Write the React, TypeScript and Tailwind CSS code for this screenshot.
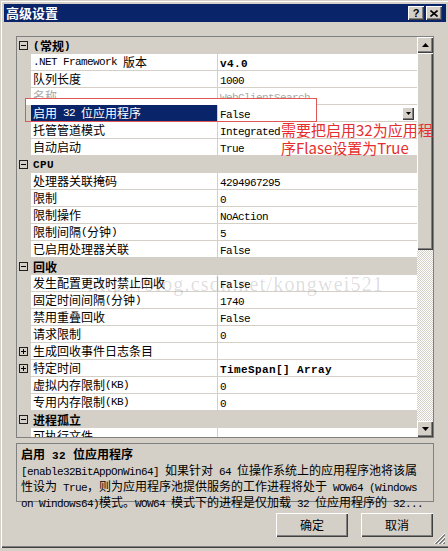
import React from "react";

type Row =
  | { kind: "cat"; label: string }
  | {
      kind: "item";
      name: string;
      value?: string;
      bold?: boolean;
      disabled?: boolean;
      selected?: boolean;
      expand?: boolean;
    };

const rows: Row[] = [
  { kind: "cat", label: "(常规)" },
  { kind: "item", name: ".NET Framework 版本", value: "v4.0", bold: true },
  { kind: "item", name: "队列长度", value: "1000" },
  { kind: "item", name: "名称", value: "WebClientSearch", disabled: true },
  { kind: "item", name: "启用 32 位应用程序", value: "False", selected: true },
  { kind: "item", name: "托管管道模式", value: "Integrated" },
  { kind: "item", name: "自动启动", value: "True" },
  { kind: "cat", label: "CPU" },
  { kind: "item", name: "处理器关联掩码", value: "4294967295" },
  { kind: "item", name: "限制", value: "0" },
  { kind: "item", name: "限制操作", value: "NoAction" },
  { kind: "item", name: "限制间隔(分钟)", value: "5" },
  { kind: "item", name: "已启用处理器关联", value: "False" },
  { kind: "cat", label: "回收" },
  { kind: "item", name: "发生配置更改时禁止回收", value: "False" },
  { kind: "item", name: "固定时间间隔(分钟)", value: "1740" },
  { kind: "item", name: "禁用重叠回收", value: "False" },
  { kind: "item", name: "请求限制", value: "0" },
  { kind: "item", name: "生成回收事件日志条目", value: "", expand: true },
  { kind: "item", name: "特定时间", value: "TimeSpan[] Array", bold: true, expand: true },
  { kind: "item", name: "虚拟内存限制(KB)", value: "0" },
  { kind: "item", name: "专用内存限制(KB)", value: "0" },
  { kind: "cat", label: "进程孤立" },
  { kind: "item", name: "可执行文件", value: "" },
];

function Mixed({ text, bold = false }: { text: string; bold?: boolean }) {
  const parts = text.split(/([\x00-\x7F]+)/).filter((p) => p.length > 0);
  return (
    <>
      {parts.map((p, i) =>
        /^[\x00-\x7F]+$/.test(p) ? (
          <span
            key={i}
            className={
              bold
                ? "font-['Liberation_Mono',monospace] text-[11px] font-bold tracking-[0.4px] whitespace-pre"
                : "font-['Liberation_Mono',monospace] text-[11px] tracking-[-0.6px] whitespace-pre"
            }
          >
            {p}
          </span>
        ) : (
          <span
            key={i}
            className={
              bold
                ? "font-['Noto_Sans_CJK_SC',sans-serif] text-[12px] font-bold"
                : "font-['Noto_Sans_CJK_SC',sans-serif] text-[12px]"
            }
          >
            {p}
          </span>
        )
      )}
    </>
  );
}

function ExpandBox({ plus }: { plus: boolean }) {
  return (
    <svg width="9" height="9" viewBox="0 0 9 9" className="block">
      <rect x="0.5" y="0.5" width="8" height="8" fill="none" stroke="#202020" />
      <line x1="2" y1="4.5" x2="7" y2="4.5" stroke="#000" />
      {plus && <line x1="4.5" y1="2" x2="4.5" y2="7" stroke="#000" />}
    </svg>
  );
}

function Arrow({ up }: { up: boolean }) {
  return (
    <svg width="7" height="4" viewBox="0 0 7 4" className="block">
      {up ? <polygon points="3.5,0 7,4 0,4" fill="#000" /> : <polygon points="0,0 7,0 3.5,4" fill="#000" />}
    </svg>
  );
}

const raised =
  "bg-[#d4d0c8] shadow-[inset_1px_1px_0_#ffffff,inset_-1px_-1px_0_#404040,inset_-2px_-2px_0_#808080]";

export default function App() {
  return (
    <div className="relative w-[448px] h-[551px] bg-[#d4d0c8] overflow-hidden select-none">
      <div className="h-[548px] pt-[4px] pl-[4px] pr-[2px] shadow-[inset_1px_1px_0_#d4d0c8,inset_2px_2px_0_#ffffff,inset_0_-1px_0_#404040,inset_0_-2px_0_#808080]">
        {/* Title bar */}
        <div className="h-[18px] bg-[#0a246a] flex items-center justify-between pl-[2px] pr-[4px]">
          <span className="font-['Noto_Sans_CJK_SC',sans-serif] text-[13px] font-bold text-white leading-[18px]">
            高级设置
          </span>
          <div className="flex gap-[2px]">
            <div className={`w-[16px] h-[14px] flex items-center justify-center ${raised}`}>
              <span className="font-['Liberation_Sans',sans-serif] text-[11px] font-bold leading-[11px] text-black">
                ?
              </span>
            </div>
            <div className={`w-[16px] h-[14px] flex items-center justify-center ${raised}`}>
              <svg width="8" height="7" viewBox="0 0 8 7" className="block">
                <path d="M0.5 0.5 L7.5 6.5 M7.5 0.5 L0.5 6.5" stroke="#000" strokeWidth="1.6" />
              </svg>
            </div>
          </div>
        </div>

        {/* Content */}
        <div className="px-[12px] pt-[14px]">
          {/* Property grid */}
          <div className="h-[402px] border border-[#808080] flex bg-white">
            <div className="w-[400px] h-[400px] overflow-hidden flex flex-col text-black">
              {rows.map((r, i) =>
                r.kind === "cat" ? (
                  <div key={i} className="h-[17px] shrink-0 flex bg-[#d4d0c8] leading-[16px]">
                    <div className="w-[14px] flex items-center pl-[2px]">
                      <ExpandBox plus={false} />
                    </div>
                    <div className="flex-1 pl-[2px] flex items-center whitespace-nowrap">
                      <Mixed text={r.label} bold />
                    </div>
                  </div>
                ) : (
                  <div key={i} className="h-[17px] shrink-0 flex leading-[16px]">
                    <div className="w-[14px] bg-[#d4d0c8] flex items-center pl-[2px]">
                      {r.expand && <ExpandBox plus />}
                    </div>
                    <div
                      className={`w-[187px] border-b border-r border-[#d4d0c8] pl-[2px] flex items-center whitespace-nowrap overflow-hidden ${
                        r.selected ? "bg-[#0a246a] text-white" : "bg-white"
                      } ${r.disabled ? "text-[#a8a8a8]" : ""}`}
                    >
                      <Mixed text={r.name} />
                    </div>
                    <div
                      className={`flex-1 border-b border-[#d4d0c8] pl-[2px] pr-[3px] flex items-center justify-between whitespace-nowrap overflow-hidden bg-white ${
                        r.disabled ? "text-[#a8a8a8]" : ""
                      }`}
                    >
                      <span>
                        <Mixed text={r.value ?? ""} bold={r.bold} />
                      </span>
                      {r.selected && (
                        <div className={`w-[12px] h-[13px] flex items-center justify-center ${raised}`}>
                          <svg width="5" height="3" viewBox="0 0 5 3" className="block">
                            <polygon points="0,0 5,0 2.5,3" fill="#000" />
                          </svg>
                        </div>
                      )}
                    </div>
                  </div>
                )
              )}
            </div>
            {/* Scrollbar */}
            <div className="w-[16px] h-[400px] flex flex-col bg-[#d4d0c8]">
              <div className={`h-[16px] flex items-center justify-center ${raised}`}>
                <Arrow up />
              </div>
              <div className={`h-[197px] ${raised}`} />
              <div className="flex-1 bg-[repeating-conic-gradient(#d4d0c8_0%_25%,#ffffff_0%_50%)] bg-size-[2px_2px]" />
              <div className={`h-[16px] flex items-center justify-center ${raised}`}>
                <Arrow up={false} />
              </div>
            </div>
          </div>

          {/* Description */}
          <div className="mt-[5px] h-[59px] border border-[#808080] pl-[4px] pt-[2px] text-black">
            <div className="leading-[14px] whitespace-nowrap">
              <Mixed text="启用 32 位应用程序" bold />
            </div>
            <div className="leading-[13px] whitespace-nowrap">
              <Mixed text="[enable32BitAppOnWin64] 如果针对 64 位操作系统上的应用程序池将该属" />
            </div>
            <div className="leading-[13px] whitespace-nowrap">
              <Mixed text="性设为 True，则为应用程序池提供服务的工作进程将处于 WOW64 (Windows" />
            </div>
            <div className="leading-[13px] whitespace-nowrap">
              <Mixed text="on Windows64)模式。WOW64 模式下的进程是仅加载 32 位应用程序的 32..." />
            </div>
          </div>

          {/* Buttons */}
          <div className="mt-[11px] flex justify-end gap-[13px] pr-[1px]">
            <div className={`w-[72px] h-[24px] flex items-center justify-center ${raised}`}>
              <span className="font-['Noto_Sans_CJK_SC',sans-serif] text-[12px] text-black">确定</span>
            </div>
            <div className={`w-[72px] h-[24px] flex items-center justify-center ${raised}`}>
              <span className="font-['Noto_Sans_CJK_SC',sans-serif] text-[12px] text-black">取消</span>
            </div>
          </div>
        </div>
      </div>

      {/* Watermark */}
      <div className="absolute left-[88px] top-[269px] font-['Liberation_Serif',serif] text-[20px] tracking-[1.2px] text-black/15 whitespace-nowrap pointer-events-none">
        http://blog.csdn.net/kongwei521
      </div>

      {/* Red annotation rectangle */}
      <div className="absolute left-[25px] top-[98px] w-[292px] h-[24px] border border-[#e05555] pointer-events-none">
        <div className="absolute left-0 right-0 top-0 h-[6px] bg-white" />
      </div>

      {/* Red annotation text */}
      <div className="absolute left-[281px] top-[121px] font-['Noto_Sans_CJK_SC',sans-serif] text-[15px] leading-[18px] text-[#e62e2e] whitespace-nowrap pointer-events-none">
        <div>需要把启用32为应用程</div>
        <div>序Flase设置为True</div>
      </div>

      {/* Size grip */}
      <svg
        width="13"
        height="13"
        viewBox="0 0 13 13"
        className="absolute left-[433px] top-[532px] block"
      >
        <path d="M12 1 L1 12" stroke="#ffffff" />
        <path d="M12 2 L2 12 M12 3 L3 12" stroke="#808080" />
        <path d="M12 5 L5 12" stroke="#ffffff" />
        <path d="M12 6 L6 12 M12 7 L7 12" stroke="#808080" />
        <path d="M12 9 L9 12" stroke="#ffffff" />
        <path d="M12 10 L10 12 M12 11 L11 12" stroke="#808080" />
      </svg>
    </div>
  );
}
